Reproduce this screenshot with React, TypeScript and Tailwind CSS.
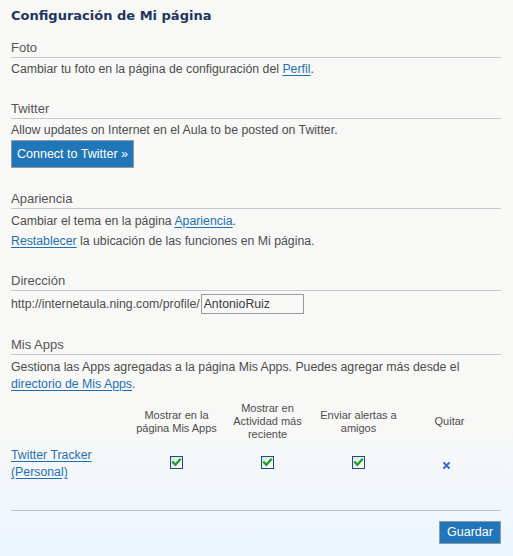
import React from "react";

function Check() {
  return (
    <div className="flex h-[13px] w-[13px] items-center justify-center border border-[#1b4d80] bg-[linear-gradient(135deg,#dfe2e4,#ffffff)]">
      <svg width="11" height="11" viewBox="0 0 11 11">
        <path d="M2 5.2 L4.4 7.8 L9 2.6" fill="none" stroke="#1e9e22" strokeWidth="2.2" strokeLinecap="square" />
      </svg>
    </div>
  );
}

function Remove() {
  return (
    <svg width="7" height="7" viewBox="0 0 7 7" className="mt-[3px] -ml-[6px]">
      <path d="M1 1 L6 6 M6 1 L1 6" stroke="#3a62cc" strokeWidth="1.8" strokeLinecap="round" />
    </svg>
  );
}

export default function App() {
  const link = "text-[#1f70b3] underline underline-offset-[2px]";
  const head = "text-[13px] leading-[16px] pb-[1px] border-b border-[#c8c8c8] text-[#555555]";
  return (
    <div className="min-h-[556px] w-full bg-[linear-gradient(to_bottom,#f8f8f7_0px,#f8f8f7_430px,#f0f6fc_500px,#ecf5fe_556px)] pl-[11px] pr-[12px] pt-[8px] font-['Liberation_Sans',Arial,sans-serif] text-[12.3px] leading-[17px] text-[#4d4d4d]">
      <h1 className="font-['DejaVu_Sans',Verdana,sans-serif] text-[13px] font-bold leading-[16px] text-[#1e3560]">
        Configuración de Mi página
      </h1>

      <section className="mt-[16px]">
        <h2 className={head}>Foto</h2>
        <p className="mt-[3px]">
          Cambiar tu foto en la página de configuración del <a className={link}>Perfil</a>.
        </p>
      </section>

      <section className="mt-[23px]">
        <h2 className={head}>Twitter</h2>
        <p className="mt-[3px]">Allow updates on Internet en el Aula to be posted on Twitter.</p>
        <button className="mt-[1px] flex h-[28px] w-[123px] items-center justify-center border border-[#8f9aa4] bg-[#2076b8] text-[12.5px] text-white">
          Connect to Twitter »
        </button>
      </section>

      <section className="mt-[23px]">
        <h2 className={head}>Apariencia</h2>
        <p className="mt-[4px]">
          Cambiar el tema en la página <a className={link}>Apariencia</a>.
        </p>
        <p className="mt-[3px]">
          <a className={link}>Restablecer</a> la ubicación de las funciones en Mi página.
        </p>
      </section>

      <section className="mt-[23px]">
        <h2 className={head}>Dirección</h2>
        <div className="mt-[3px] flex h-[20px] items-center">
          <span>http://internetaula.ning.com/profile/</span>
          <div className="ml-[1px] flex h-[20px] w-[103px] items-center border border-[#9a9a9a] bg-[#f8f8f7] px-[2px] text-[#3a3a3a]">
            AntonioRuiz
          </div>
        </div>
      </section>

      <section className="mt-[23px]">
        <h2 className={head}>Mis Apps</h2>
        <p className="mt-[4px]">
          Gestiona las Apps agregadas a la página Mis Apps. Puedes agregar más desde el{" "}
          <a className={link}>directorio de Mis Apps</a>.
        </p>

        <div className="mt-[9px] grid grid-cols-[120px_91px_91px_91px_91px] items-center text-center text-[11px] leading-[13px] text-[#4d4d4d]">
          <div />
          <div>
            Mostrar en la
            <br />
            página Mis Apps
          </div>
          <div>
            Mostrar en
            <br />
            Actividad más
            <br />
            reciente
          </div>
          <div>
            Enviar alertas a
            <br />
            amigos
          </div>
          <div>Quitar</div>
        </div>

        <div className="mt-[6px] grid grid-cols-[120px_91px_91px_91px_91px] items-center">
          <div>
            <a className={link}>
              Twitter Tracker
              <br />
              (Personal)
            </a>
          </div>
          <div className="-mt-[3px] flex justify-center">
            <Check />
          </div>
          <div className="-mt-[3px] flex justify-center">
            <Check />
          </div>
          <div className="-mt-[3px] flex justify-center">
            <Check />
          </div>
          <div className="flex justify-center">
            <Remove />
          </div>
        </div>
      </section>

      <div className="mt-[29px] border-t border-[#c0c0c0]" />
      <div className="mt-[10px] flex justify-end">
        <button className="flex h-[23px] w-[62px] items-center justify-center border border-[#8f9aa4] bg-[#2076b8] text-[12.5px] text-white">
          Guardar
        </button>
      </div>
    </div>
  );
}
